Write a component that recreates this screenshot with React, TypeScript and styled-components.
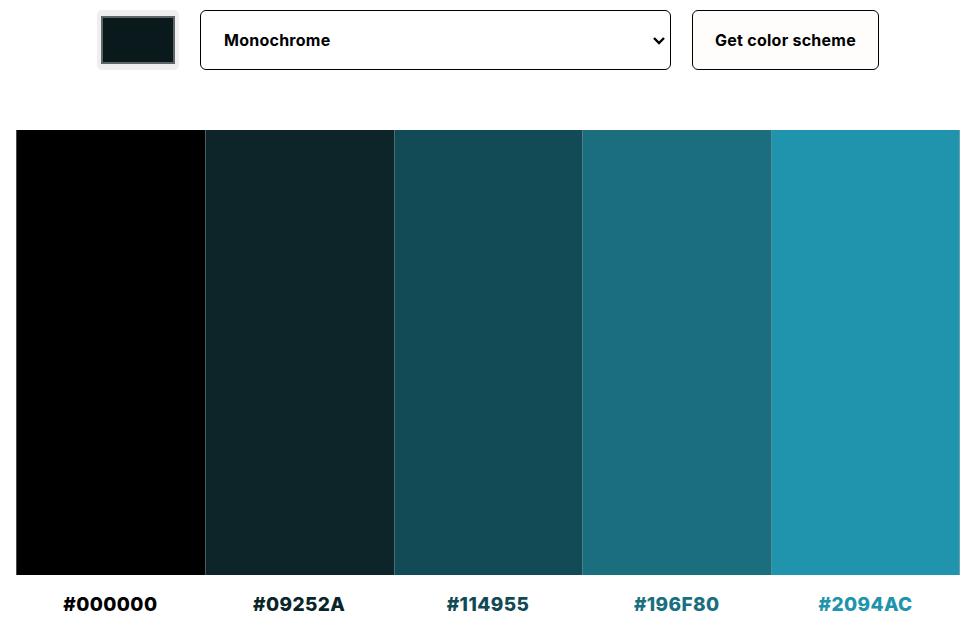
import React from "react";
import styled, { createGlobalStyle } from "styled-components";

const Global = createGlobalStyle`
  html, body { margin: 0; padding: 0; background: #fff; }
  body { font-family: "Inter", "Liberation Sans", sans-serif; }
  * { box-sizing: border-box; }
`;

const Page = styled.div`
  width: 972px;
  height: 631px;
  display: flex;
  flex-direction: column;
  padding: 10px 12px 0 16px;
`;

const Toolbar = styled.div`
  display: flex;
  gap: 21px;
  align-items: center;
  padding-left: 81px;
  height: 60px;
`;

const ColorWell = styled.div`
  width: 82px;
  height: 60px;
  background: #efefef;
  border-radius: 5px;
  padding: 6px 4px;
  display: flex;
`;

const Swatch = styled.div<{ $c: string }>`
  flex: 1;
  background: ${(p) => p.$c};
  border: 2px solid #5f6667;
`;

const Select = styled.div`
  width: 471px;
  height: 60px;
  border: 1px solid #000;
  border-radius: 6px;
  display: flex;
  align-items: center;
  justify-content: space-between;
  padding: 0 4px 0 23px;
  font-size: 16px;
  font-weight: 700;
  color: #000;
  letter-spacing: 0.25px;
`;

const Button = styled.div`
  width: 187px;
  height: 60px;
  border: 1px solid #000;
  border-radius: 6px;
  background: #fefdfb;
  display: flex;
  align-items: center;
  justify-content: center;
  font-size: 16px;
  font-weight: 700;
  color: #000;
  letter-spacing: 0.25px;
`;

const Palette = styled.div`
  margin-top: 60px;
  display: grid;
  grid-template-columns: repeat(5, 1fr);
  width: 944px;
`;

const Column = styled.div`
  display: flex;
  flex-direction: column;
  align-items: stretch;
`;

const Stripe = styled.div<{ $c: string; $last?: boolean }>`
  height: 445px;
  background: ${(p) => p.$c};
  border-left: 1px solid rgba(120, 140, 145, 0.55);
  ${(p) => (p.$last ? "border-right: 1px solid rgba(150,170,175,0.6);" : "")}
`;

const Label = styled.div<{ $c: string }>`
  text-align: center;
  margin-top: 18px;
  font-size: 19px;
  font-weight: 800;
  color: ${(p) => p.$c};
  letter-spacing: 0.4px;
`;

const colors = ["#000000", "#09252A", "#114955", "#196F80", "#2094AC"];
const fills = ["#000000", "#0d2429", "#124a55", "#1b6e7e", "#2094ad"];

export default function App() {
  return (
    <Page>
      <Global />
      <Toolbar>
        <ColorWell>
          <Swatch $c="#09191c" />
        </ColorWell>
        <Select>
          <span>Monochrome</span>
          <svg width="14" height="14" viewBox="0 0 14 14">
            <path d="M2 5 L7 10 L12 5" fill="none" stroke="#000" strokeWidth="2.4" />
          </svg>
        </Select>
        <Button>Get color scheme</Button>
      </Toolbar>
      <Palette>
        {colors.map((c, i) => (
          <Column key={c}>
            <Stripe $c={fills[i]} $last={i === 4} />
            <Label $c={c}>{c}</Label>
          </Column>
        ))}
      </Palette>
    </Page>
  );
}
